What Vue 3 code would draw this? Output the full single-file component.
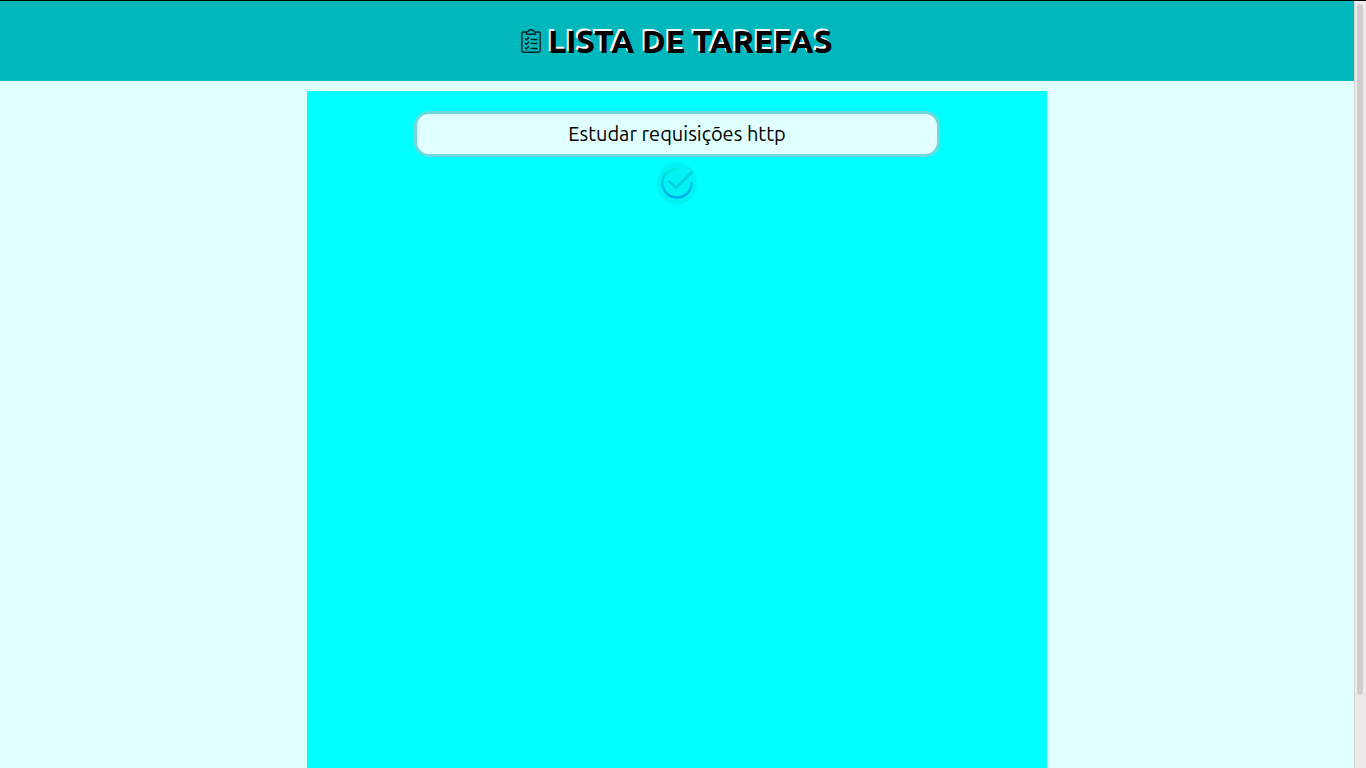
<script setup>
import { ref } from 'vue'

const task = ref('Estudar requisições http')
</script>

<template>
  <div class="window">
    <div class="page">
      <header class="header">
        <svg class="clipboard" viewBox="0 0 20 24" fill="none" stroke="#03282a" stroke-width="1.500" aria-hidden="true">
          <path d="M5.500 3H2.500Q.8 3 .8 4.700V21.500Q.8 23.200 2.500 23.200H17.500Q19.200 23.200 19.200 21.500V4.700Q19.200 3 17.500 3H14.500" />
          <path d="M5.500 5.300V3.500Q5.500 2.500 7 2.500Q7.800 .7 10 .7T13 2.500Q14.500 2.500 14.500 3.500V5.300Z" />
          <path d="M4 9.500l1.500 1.300 2.500-2.500M4 14l1.500 1.300 2.500-2.500M4 18.500l1.500 1.300 2.500-2.500" />
          <path d="M9.500 10.500H16.500M9.500 14.500H16.500M9.500 19.500H16.500" />
        </svg>
        <h1>LISTA DE TAREFAS</h1>
      </header>
      <main class="panel">
        <form class="form" @submit.prevent>
          <input v-model="task" class="task" type="text" aria-label="Tarefa" />
          <button class="add" type="submit" aria-label="Adicionar tarefa">
            <svg viewBox="0 0 34 34" fill="none" aria-hidden="true">
              <defs>
                <linearGradient id="ring" x1="0" y1="0" x2="0" y2="1">
                  <stop offset="0" stop-color="#00eddf" />
                  <stop offset=".5" stop-color="#00cbe0" />
                  <stop offset="1" stop-color="#00a9ef" />
                </linearGradient>
              </defs>
              <path d="M17 2.500A14.500 14.500 0 1 0 31.500 17" stroke="url(#ring)" stroke-width="2.500" stroke-linecap="round" />
              <path d="M9.500 15.500L16 22L32 6" stroke="#00d0d9" stroke-width="2.500" stroke-linecap="round" />
            </svg>
          </button>
        </form>
      </main>
    </div>
    <div class="track" aria-hidden="true"><div class="thumb"></div></div>
  </div>
</template>

<style>
body {
  margin: 0;
}
</style>

<style scoped>
* {
  box-sizing: border-box;
}
.window {
  display: flex;
  min-height: 100vh;
  border-top: 1px solid #000;
  background: #e0ffff;
  color: #000;
  font-family: Ubuntu, "Noto Sans", sans-serif;
}
.page {
  flex: 1;
  display: flex;
  flex-direction: column;
}
.header {
  display: flex;
  align-items: center;
  justify-content: center;
  gap: 7px;
  height: 80px;
  background: #00b7bb;
}
.clipboard {
  width: 20px;
  height: 24px;
}
h1 {
  margin: 0;
  font-size: 32px;
  line-height: 40px;
  font-weight: 800;
  text-shadow: -2px -2px 0 #fff;
}
.panel {
  flex: 1;
  width: 100%;
  max-width: 740px;
  margin: 10px auto 0;
  padding: 20px;
  background: #00ffff;
}
.form {
  display: flex;
  flex-direction: column;
  align-items: center;
  gap: 5px;
}
.task {
  width: 100%;
  max-width: 526px;
  height: 46px;
  padding: 0 10px 2px;
  border: 3px solid #70d8da;
  border-radius: 15px;
  outline: none;
  background: #e0ffff;
  color: #000;
  font: inherit;
  font-size: 20px;
  text-align: center;
}
.add {
  display: flex;
  align-items: center;
  justify-content: center;
  width: 40px;
  height: 43px;
  padding: 0 0 2px;
  border: 0;
  border-radius: 50%;
  background: #00f2f2;
  cursor: pointer;
}
.add svg {
  width: 34px;
  height: 34px;
}
.track {
  width: 12px;
  padding: 3px 2px 0;
  border-left: 1px solid #d8d0cc;
  background: #edebea;
}
.thumb {
  width: 6px;
  height: 90vh;
  border-radius: 3px;
  background: #cecece;
}
</style>
